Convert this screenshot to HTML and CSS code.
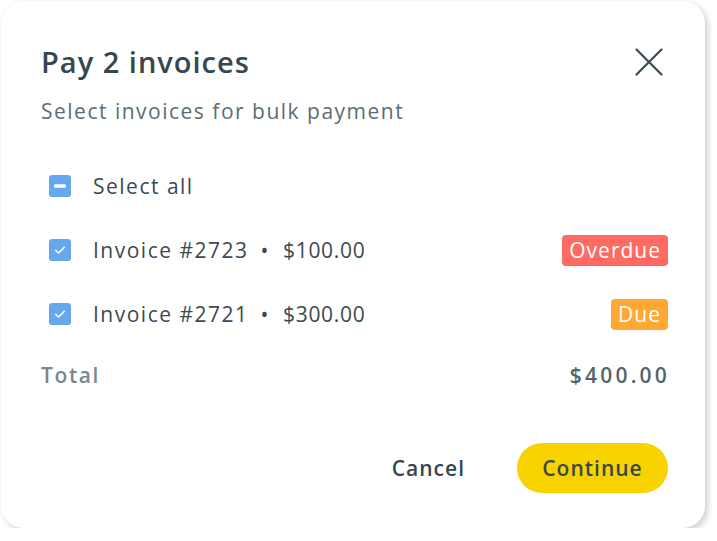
FILE: index.html
```html
<!DOCTYPE html>
<html>
    <head>
        <meta charset="utf-8" />
        <title>Pay 2 invoices</title>
        <link rel="stylesheet" href="styles.css">
    </head>
    <body>
        <div class="dialog">
            <div class="head">
                <h1 class="title">Pay 2 invoices</h1>
                <button class="close" aria-label="Close">
                    <svg width="28" height="28" viewBox="0 0 28 28">
                        <path d="M1.5 1.5 L26.5 26.5 M26.5 1.5 L1.5 26.5" stroke="#3b4a52" stroke-width="2.2" stroke-linecap="round" fill="none" />
                    </svg>
                </button>
            </div>
            <p class="sub">Select invoices for bulk payment</p>

            <ul class="list">
                <li class="row">
                    <span class="box">
                        <svg width="12" height="12" viewBox="0 0 12 12"><path d="M1.5 6 H10.5" stroke="#fff" stroke-width="3.4" stroke-linecap="round" /></svg>
                    </span>
                    <span class="label">Select all</span>
                </li>
                <li class="row">
                    <span class="box">
                        <svg width="12" height="12" viewBox="0 0 12 12"><path d="M1.8 6.4 L4.6 9 L10.2 3.4" stroke="#fff" stroke-width="1.6" stroke-linecap="round" stroke-linejoin="round" fill="none" /></svg>
                    </span>
                    <span class="label">Invoice #2723<i class="dot">•</i><b class="amt">$100.00</b></span>
                    <span class="tag tag-over">Overdue</span>
                </li>
                <li class="row">
                    <span class="box">
                        <svg width="12" height="12" viewBox="0 0 12 12"><path d="M1.8 6.4 L4.6 9 L10.2 3.4" stroke="#fff" stroke-width="1.6" stroke-linecap="round" stroke-linejoin="round" fill="none" /></svg>
                    </span>
                    <span class="label">Invoice #2721<i class="dot">•</i><b class="amt">$300.00</b></span>
                    <span class="tag tag-due">Due</span>
                </li>
            </ul>

            <div class="total">
                <span>Total</span>
                <span class="sum">$400.00</span>
            </div>

            <div class="actions">
                <button class="btn btn-text">Cancel</button>
                <button class="btn btn-main">Continue</button>
            </div>
        </div>
    </body>
</html>
```

FILE: styles.css
```css
* {
    margin: 0;
    padding: 0;
    box-sizing: border-box;
}
li {
    list-style: none;
}
body {
    background: #fff;
    font-family: "Open Sans", "Liberation Sans", sans-serif;
    color: #3b4a52;
}

.dialog {
    width: 704px;
    height: 527px;
    margin: 1px 0 0 1px;
    padding: 40px 37px 35px 40px;
    background: #fff;
    border-radius: 22px;
    box-shadow: 3px 3px 6px rgba(0, 0, 0, 0.18), 0 0 2px rgba(0, 0, 0, 0.06);
}

.head {
    display: flex;
    justify-content: space-between;
    align-items: center;
    height: 42px;
}
.title {
    font-size: 29px;
    font-weight: 600;
    line-height: 42px;
    letter-spacing: 1px;
    color: #37474f;
}
.close {
    border: 0;
    background: none;
    width: 28px;
    height: 28px;
    margin-right: 5px;
    display: flex;
}

.sub {
    margin-top: 14px;
    font-size: 21px;
    line-height: 28px;
    letter-spacing: 1.5px;
    color: #5b6d75;
}

.list {
    margin-top: 29px;
}
.list .row {
    display: flex;
    align-items: center;
    height: 64px;
}
.list .box {
    display: flex;
    align-items: center;
    justify-content: center;
    width: 22px;
    height: 22px;
    margin-left: 8px;
    border-radius: 3px;
    background: #65a8ef;
}
.list .label {
    margin-left: 22px;
    font-size: 21px;
    letter-spacing: 1.5px;
    color: #3b4a52;
    flex: 1;
}
.list .dot {
    font-style: normal;
    margin: 0 13px 0 12px;
}
.list .amt {
    font-weight: 400;
    letter-spacing: 0.7px;
}
.tag {
    height: 31px;
    line-height: 31px;
    padding: 0 7px;
    border-radius: 4px;
    color: #fff;
    font-size: 21px;
    letter-spacing: 1px;
}
.tag-over {
    background: #ff6b63;
}
.tag-due {
    background: #ffa834;
}

.total {
    display: flex;
    justify-content: space-between;
    margin-top: 15px;
    line-height: 28px;
    font-size: 21px;
    font-weight: 600;
    letter-spacing: 1.6px;
    color: #7b878d;
}
.total .sum {
    color: #52646c;
    letter-spacing: 3.2px;
    margin-right: -2px;
}

.actions {
    display: flex;
    justify-content: flex-end;
    align-items: center;
    gap: 30px;
    margin-top: 54px;
}
.btn {
    border: 0;
    font-family: inherit;
    font-size: 21px;
    font-weight: 600;
    letter-spacing: 1px;
    color: #37474f;
    background: none;
}
.btn-text {
    padding: 0 22px;
    height: 50px;
}
.btn-main {
    width: 151px;
    height: 50px;
    border-radius: 25px;
    background: #f9d300;
}
```
